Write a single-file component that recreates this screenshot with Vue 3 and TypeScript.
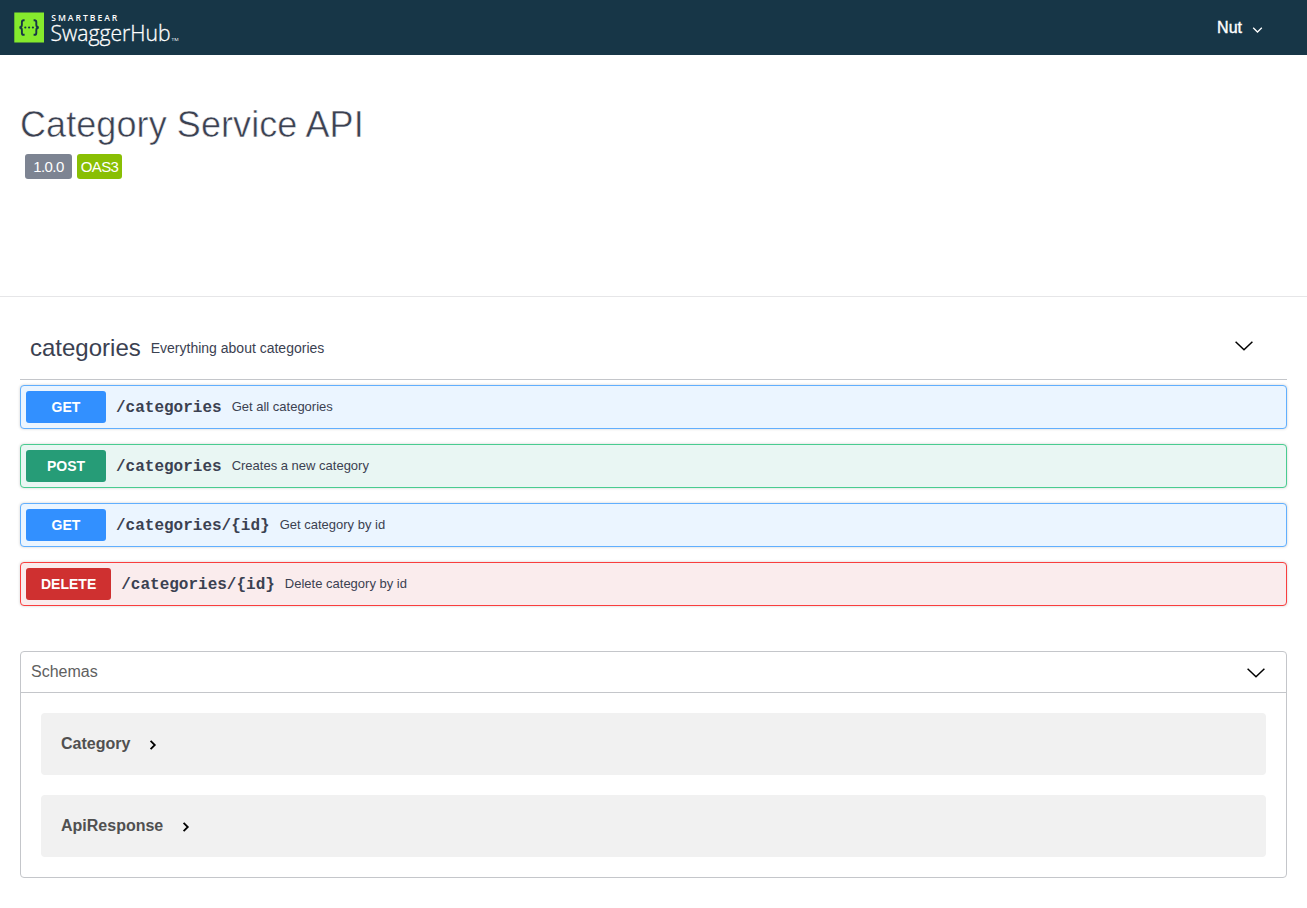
<script setup lang="ts">
import { ref } from 'vue'

interface Operation {
  method: 'get' | 'post' | 'delete'
  path: string
  summary: string
}

const operations = ref<Operation[]>([
  { method: 'get', path: '/categories', summary: 'Get all categories' },
  { method: 'post', path: '/categories', summary: 'Creates a new category' },
  { method: 'get', path: '/categories/{id}', summary: 'Get category by id' },
  { method: 'delete', path: '/categories/{id}', summary: 'Delete category by id' },
])

const schemas = ref<string[]>(['Category', 'ApiResponse'])
</script>

<template>
  <div class="page">
    <header class="topbar">
      <svg class="logo" width="180" height="55" viewBox="0 0 180 55">
        <rect x="14.3" y="12.5" width="29.7" height="30" fill="#85ea2d" />
        <g fill="none" stroke="#173647" stroke-width="1.9">
          <path d="M24.6 20.2h-.8q-1.9 0-1.9 1.9v2.7q0 2.6-2.5 2.7q2.5.1 2.5 2.7v2.7q0 1.9 1.9 1.9h.8" />
          <path d="M33.6 20.2h.8q1.9 0 1.9 1.9v2.7q0 2.6 2.5 2.7q-2.5.1-2.5 2.7v2.7q0 1.9-1.9 1.9h-.8" />
        </g>
        <g fill="#173647">
          <circle cx="25.3" cy="27.5" r="1.1" />
          <circle cx="29.1" cy="27.5" r="1.1" />
          <circle cx="32.9" cy="27.5" r="1.1" />
        </g>
        <text class="brand" x="51.3" y="20.8" textLength="66">SMARTBEAR</text>
        <text class="product" x="50.5" y="40.7" textLength="120" lengthAdjust="spacingAndGlyphs">SwaggerHub</text>
        <text class="mark" x="171.5" y="40.5" textLength="7" lengthAdjust="spacingAndGlyphs">TM</text>
      </svg>
      <div class="user">
        <span>Nut</span>
        <svg width="11" height="8" viewBox="0 0 11 8"><path d="M1.2 1.8 5.5 6 9.8 1.8" fill="none" stroke="#fff" stroke-width="1.3" /></svg>
      </div>
    </header>

    <section class="info">
      <h1>Category Service API</h1>
      <div class="badges">
        <span class="badge version">1.0.0</span>
        <span class="badge oas">OAS3</span>
      </div>
    </section>

    <main class="content">
      <div class="tag">
        <h2>categories</h2>
        <p>Everything about categories</p>
        <svg class="arrow" width="20" height="12" viewBox="0 0 20 12"><path d="M1.6 1.8 10 9.8 18.4 1.8" fill="none" stroke="#000" stroke-width="1.5" /></svg>
      </div>

      <div v-for="(op, i) in operations" :key="i" class="operation" :class="op.method">
        <span class="method">{{ op.method.toUpperCase() }}</span>
        <span class="path">{{ op.path }}</span>
        <span class="summary">{{ op.summary }}</span>
      </div>

      <section class="schemas">
        <div class="schemas-head">
          <h3>Schemas</h3>
          <svg class="head-arrow" width="20" height="12" viewBox="0 0 20 12"><path d="M1.6 1.8 10 9.8 18.4 1.8" fill="none" stroke="#000" stroke-width="1.5" /></svg>
        </div>
        <div class="schemas-list">
          <div v-for="name in schemas" :key="name" class="schema">
            <span>{{ name }}</span>
            <svg width="8" height="12" viewBox="0 0 8 12"><path d="M1.6 1.8 5.8 6 1.6 10.2" fill="none" stroke="#000" stroke-width="1.8" /></svg>
          </div>
        </div>
      </section>
    </main>
  </div>
</template>

<style>
body {
  margin: 0;
  background: #fff;
}
</style>

<style scoped>
.page {
  box-sizing: border-box;
  height: 908px;
  overflow: hidden;
  color: #3b4151;
  font-family: "Liberation Sans", Arial, sans-serif;
}
h1, h2, h3, p {
  margin: 0;
  font-weight: 400;
}
svg {
  display: block;
  flex: none;
}
.topbar {
  display: flex;
  justify-content: space-between;
  height: 55px;
  background: #173647;
}
.brand {
  fill: #fff;
  font: 600 8.6px "Open Sans", sans-serif;
}
.product {
  fill: #fff;
  stroke: #fff;
  stroke-width: 0.3px;
  font: 300 21.5px "Open Sans", sans-serif;
}
.mark {
  fill: #fff;
  font: 400 4px "Open Sans", sans-serif;
}
.user {
  display: flex;
  gap: 10px;
  padding: 18px 44px 0 0;
  color: #fff;
  font-size: 16px;
  line-height: 20px;
  -webkit-text-stroke: 0.4px #fff;
}
.user svg {
  margin-top: 8px;
}
.info {
  box-sizing: border-box;
  height: 242px;
  padding: 49px 20px 0;
  border-bottom: 1px solid #e6e6e8;
}
h1 {
  font-size: 36px;
  line-height: 42px;
  letter-spacing: 0.08px;
  -webkit-text-stroke: 0.5px #fff;
}
.badges {
  display: flex;
  gap: 5px;
  padding: 8px 5px 0;
}
.badge {
  box-sizing: border-box;
  height: 25px;
  border-radius: 3px;
  color: #fff;
  font-size: 15px;
  letter-spacing: -0.6px;
  line-height: 25px;
  text-align: center;
}
.version {
  width: 47px;
  background: #7d8492;
}
.oas {
  width: 45px;
  background: #89bf04;
}
.content {
  padding: 20px 20px 0;
}
.tag {
  display: flex;
  align-items: center;
  box-sizing: border-box;
  height: 63px;
  margin-bottom: 5px;
  padding: 0 33px 0 10px;
  border-bottom: 1px solid #c4c6ca;
}
.tag h2 {
  font-size: 24px;
  line-height: 28px;
}
.tag p {
  padding-left: 10px;
  font-size: 14px;
}
.arrow {
  margin: -5px 0 0 auto;
}
.operation {
  display: flex;
  align-items: center;
  box-sizing: border-box;
  height: 44px;
  margin-bottom: 15px;
  padding: 5px;
  border: 1px solid;
  border-radius: 4px;
  box-shadow: 0 0 3px rgba(0, 0, 0, 0.19);
}
.method {
  box-sizing: border-box;
  min-width: 80px;
  height: 32px;
  padding: 0 15px;
  border-radius: 3px;
  color: #fff;
  font-size: 14px;
  font-weight: 700;
  line-height: 32px;
  text-align: center;
}
.path {
  padding: 2px 10px 0;
  font: 700 16px "Liberation Mono", monospace;
}
.summary {
  padding-bottom: 2px;
  font-size: 13px;
}
.get {
  border-color: #61affe;
  background: #ebf5ff;
}
.get .method {
  background: #3290ff;
}
.post {
  border-color: #49cc90;
  background: #e9f6f3;
}
.post .method {
  background: #269c77;
}
.delete {
  border-color: #f93e3e;
  background: #faeced;
}
.delete .method {
  background: #cf3030;
}
.schemas {
  margin-top: 45px;
  border: 1px solid #c4c6ca;
  border-radius: 4px;
}
.schemas-head {
  display: flex;
  align-items: center;
  justify-content: space-between;
  height: 40px;
  padding: 0 20px 0 10px;
  border-bottom: 1px solid #c4c6ca;
}
.head-arrow {
  margin-top: 1px;
}
h3 {
  color: #606060;
  font-size: 16px;
}
.schemas-list {
  display: grid;
  gap: 20px;
  padding: 20px;
}
.schema {
  display: flex;
  align-items: center;
  gap: 19px;
  height: 62px;
  padding: 0 20px;
  border-radius: 4px;
  background: #f1f1f1;
  color: #505050;
  font-size: 16px;
  font-weight: 700;
}
.schema svg {
  margin-top: 2px;
}
</style>
